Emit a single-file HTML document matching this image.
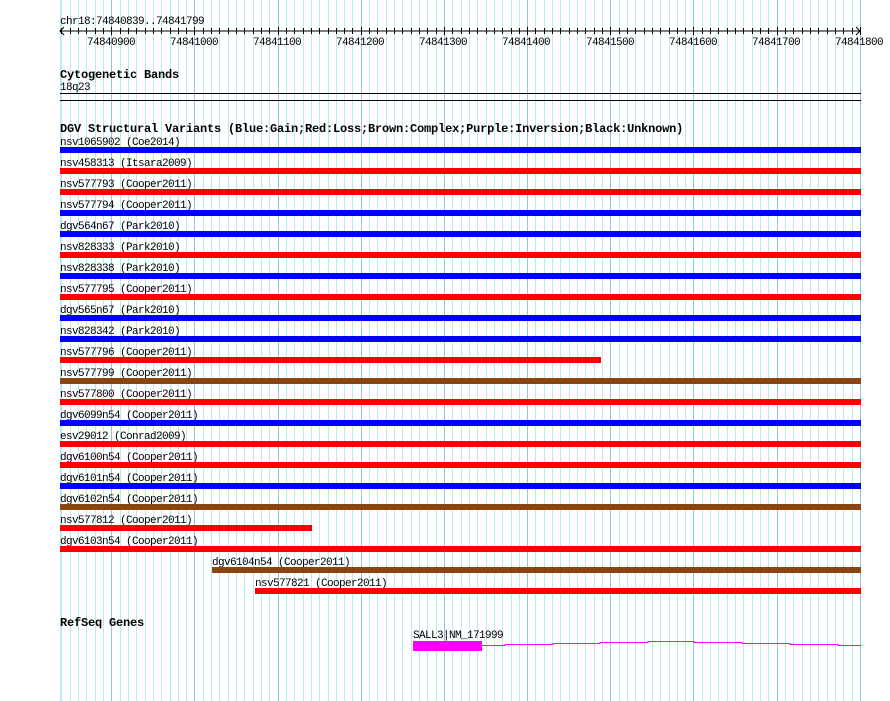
<!DOCTYPE html>
<html><head><meta charset="utf-8"><style>
html,body{margin:0;padding:0;background:#fff;width:890px;height:701px;overflow:hidden}
svg text{font-family:"Liberation Mono",monospace;font-size:11px;letter-spacing:-0.6px;fill:#000}
svg text.b{font-weight:bold;font-size:12px;letter-spacing:-0.2px}
</style></head><body>
<svg id="s" width="890" height="701" xmlns="http://www.w3.org/2000/svg">
<g id="grid"></g>
<g id="ruler"></g>
<line x1="60" y1="31" x2="860" y2="31" stroke="#000"/>
<path d="M64 27 L60 31 L64 35 M856 27 L860 31 L856 35" stroke="#000" fill="none"/>
<text x="60" y="24">chr18:74840839..74841799</text>
<text x="87" y="45">74840900</text>
<text x="170" y="45">74841000</text>
<text x="253" y="45">74841100</text>
<text x="336" y="45">74841200</text>
<text x="419" y="45">74841300</text>
<text x="502" y="45">74841400</text>
<text x="586" y="45">74841500</text>
<text x="669" y="45">74841600</text>
<text x="752" y="45">74841700</text>
<text x="835" y="45">74841800</text>
<text class="b" x="60" y="78">Cytogenetic Bands</text>
<text x="60" y="90">18q23</text>
<rect x="60" y="93" width="801" height="1" fill="#000"/>
<rect x="60" y="100" width="801" height="1" fill="#000"/>
<text class="b" x="60" y="132">DGV Structural Variants (Blue:Gain;Red:Loss;Brown:Complex;Purple:Inversion;Black:Unknown)</text>
<g id="rows">
<text x="60" y="145">nsv1065902 (Coe2014)</text><rect x="60" y="147" width="801" height="6" fill="#0000ff"/>
<text x="60" y="166">nsv458313 (Itsara2009)</text><rect x="60" y="168" width="801" height="6" fill="#ff0000"/>
<text x="60" y="187">nsv577793 (Cooper2011)</text><rect x="60" y="189" width="801" height="6" fill="#ff0000"/>
<text x="60" y="208">nsv577794 (Cooper2011)</text><rect x="60" y="210" width="801" height="6" fill="#0000ff"/>
<text x="60" y="229">dgv564n67 (Park2010)</text><rect x="60" y="231" width="801" height="6" fill="#0000ff"/>
<text x="60" y="250">nsv828333 (Park2010)</text><rect x="60" y="252" width="801" height="6" fill="#ff0000"/>
<text x="60" y="271">nsv828338 (Park2010)</text><rect x="60" y="273" width="801" height="6" fill="#0000ff"/>
<text x="60" y="292">nsv577795 (Cooper2011)</text><rect x="60" y="294" width="801" height="6" fill="#ff0000"/>
<text x="60" y="313">dgv565n67 (Park2010)</text><rect x="60" y="315" width="801" height="6" fill="#0000ff"/>
<text x="60" y="334">nsv828342 (Park2010)</text><rect x="60" y="336" width="801" height="6" fill="#0000ff"/>
<text x="60" y="355">nsv577796 (Cooper2011)</text><rect x="60" y="357" width="541" height="6" fill="#ff0000"/>
<text x="60" y="376">nsv577799 (Cooper2011)</text><rect x="60" y="378" width="801" height="6" fill="#8b4513"/>
<text x="60" y="397">nsv577800 (Cooper2011)</text><rect x="60" y="399" width="801" height="6" fill="#ff0000"/>
<text x="60" y="418">dgv6099n54 (Cooper2011)</text><rect x="60" y="420" width="801" height="6" fill="#0000ff"/>
<text x="60" y="439">esv29012 (Conrad2009)</text><rect x="60" y="441" width="801" height="6" fill="#ff0000"/>
<text x="60" y="460">dgv6100n54 (Cooper2011)</text><rect x="60" y="462" width="801" height="6" fill="#ff0000"/>
<text x="60" y="481">dgv6101n54 (Cooper2011)</text><rect x="60" y="483" width="801" height="6" fill="#0000ff"/>
<text x="60" y="502">dgv6102n54 (Cooper2011)</text><rect x="60" y="504" width="801" height="6" fill="#8b4513"/>
<text x="60" y="523">nsv577812 (Cooper2011)</text><rect x="60" y="525" width="252" height="6" fill="#ff0000"/>
<text x="60" y="544">dgv6103n54 (Cooper2011)</text><rect x="60" y="546" width="801" height="6" fill="#ff0000"/>
<text x="212" y="565">dgv6104n54 (Cooper2011)</text><rect x="212" y="567" width="649" height="6" fill="#8b4513"/>
<text x="255" y="586">nsv577821 (Cooper2011)</text><rect x="255" y="588" width="606" height="6" fill="#ff0000"/>
</g>
<text class="b" x="60" y="626">RefSeq Genes</text>
<text x="413" y="638">SALL3|NM_171999</text>
<rect x="413" y="641" width="69" height="10" fill="#ff00ff"/>
<path d="M481 645.5H505V644.5H553V643.5H600V642.5H648V641.5H694V642.5H742V643.5H790V644.5H838V645.5H861" stroke="#ff00ff" fill="none"/>
</svg>
<script>
var g=document.getElementById('grid'),r=document.getElementById('ruler'),h='',t='';
for(var i=-6;i<=90;i++){var x=Math.round(111.3+i*8.317);if(x<60||x>861)continue;
var maj=(i%10===0);h+='<rect x="'+x+'" y="0" width="1" height="701" fill="'+(maj?'#8ec4ec':'#b4ecf2')+'"/>';
t+='<rect x="'+x+'" y="'+(maj?27:28)+'" width="1" height="'+(maj?8:6)+'" fill="#000"/>';}
h+='<rect x="60" y="0" width="1" height="701" fill="#b4ecf2"/>';
g.innerHTML=h;r.innerHTML=t;
</script>
</body></html>
